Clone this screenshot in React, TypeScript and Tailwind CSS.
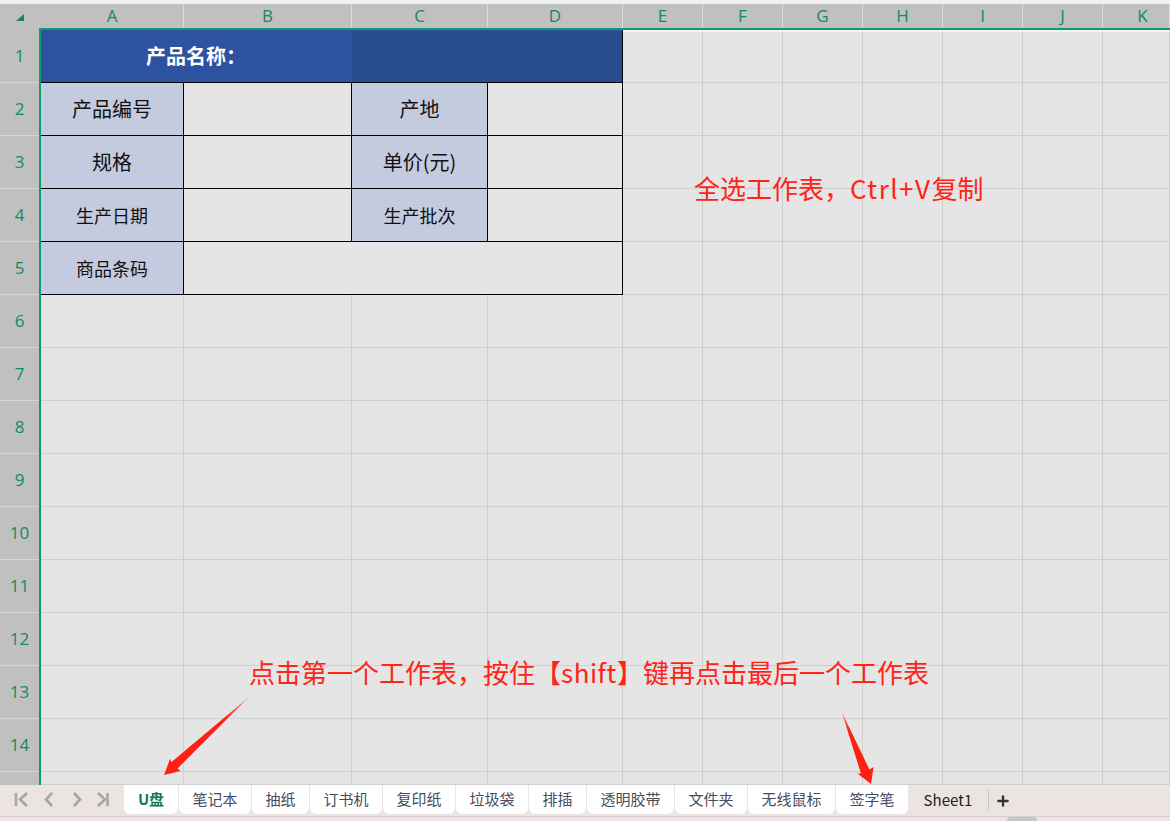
import { Plus } from 'lucide-react';

const cols = [
  { name: 'A', cls: 'w-[145px] pl-[2px]' },
  { name: 'B', cls: 'w-[168px]' },
  { name: 'C', cls: 'w-[136px]' },
  { name: 'D', cls: 'w-[135px]' },
  { name: 'E', cls: 'w-[80px]' },
  { name: 'F', cls: 'w-[80px]' },
  { name: 'G', cls: 'w-[80px]' },
  { name: 'H', cls: 'w-[80px]' },
  { name: 'I', cls: 'w-[80px]' },
  { name: 'J', cls: 'w-[80px]' },
  // runs on past the window edge, so its letter sits right of the visible middle
  { name: 'K', cls: 'w-[67px] pl-[13px]' },
];

const rows = Array.from({ length: 14 }, (_, i) => i + 1);

const tabs = [
  { name: '笔记本', cls: 'w-[72px]' },
  { name: '抽纸', cls: 'w-[57px]' },
  { name: '订书机', cls: 'w-[72px]' },
  { name: '复印纸', cls: 'w-[72px]' },
  { name: '垃圾袋', cls: 'w-[72px]' },
  { name: '排插', cls: 'w-[57px]' },
  { name: '透明胶带', cls: 'w-[87px]' },
  { name: '文件夹', cls: 'w-[72px]' },
  { name: '无线鼠标', cls: 'w-[87px]' },
  { name: '签字笔', cls: 'w-[72px]' },
];

function Label({ text, small }: { text: string; small?: boolean }) {
  return (
    <div
      className={`flex items-center justify-center bg-[#c4cbdf] border-r border-b border-black text-[#111] ${
        small ? 'text-[18px]' : 'text-[20px]'
      }`}
    >
      {text}
    </div>
  );
}

function Blank({ cls = '' }: { cls?: string }) {
  return <div className={`border-r border-b border-black ${cls}`} />;
}

// E..K for the rows the table reaches, the whole width below it
function EmptyCells({ count, cls = '' }: { count: number; cls?: string }) {
  return (
    <>
      {Array.from({ length: count }, (_, i) => (
        <div key={i} className={`border-r border-b border-r-[#cfcfcf] border-b-[#cfcfcf] ${cls}`} />
      ))}
    </>
  );
}

function SheetNav() {
  return (
    <div className="flex w-[124px] items-center h-[29px] shrink-0">
      <svg width="124" height="29" viewBox="0 0 124 29" fill="none" stroke="#a6a6a6" strokeWidth="2.6">
        <path d="M16 8v13M27 8l-7 6.5 7 6.5" />
        <path d="M52 8l-6 6.5 6 6.5" />
        <path d="M74 8l6 6.5-6 6.5" />
        <path d="M98 8l7 6.5-7 6.5M107.5 8v13" />
      </svg>
    </div>
  );
}

export default function App() {
  return (
    <div className="relative flex h-[821px] w-[1170px] flex-col overflow-hidden bg-[#f0f0f0] font-['Noto_Sans_CJK_SC','Noto_Sans',sans-serif]">
      <div className="h-1 shrink-0" />

      {/* column letters */}
      <div className="flex h-[26px] shrink-0 bg-[#c0c0c0] font-['Open_Sans','Noto_Sans_CJK_SC',sans-serif] text-[17px] text-[#128a62]">
        <div className="flex w-[39px] shrink-0 items-start justify-center pt-[10px]">
          <svg width="8" height="7" viewBox="0 0 8 7" className="ml-px">
            <path d="M8 0v7H0z" fill="#128a62" />
          </svg>
        </div>
        <div className="flex flex-1 border-b-2 border-[#129a6c]">
          {cols.map((c) => (
            <div key={c.name} className={`flex items-center justify-center border-r border-[#dadada] ${c.cls}`}>
              {c.name}
            </div>
          ))}
        </div>
      </div>

      <div className="flex h-[755px] shrink-0">
        {/* row numbers */}
        <div className="w-[39px] shrink-0 bg-[#c0c0c0] font-['Open_Sans','Noto_Sans_CJK_SC',sans-serif] text-[17px] text-[#128a62]">
          {rows.map((r) => (
            <div key={r} className="flex h-[53px] items-center justify-center border-b border-[#d6d6d6]">
              {r}
            </div>
          ))}
        </div>

        <div className="grid flex-1 grid-cols-[143px_168px_136px_135px_repeat(6,80px)_67px] grid-rows-[repeat(14,53px)_13px] border-l-2 border-[#129a6c] bg-[#e5e5e5]">
          {/* row 1 */}
          <div className="col-span-2 flex items-center justify-center border-b border-black bg-[#2c52a0] pr-[1px] text-[20px] font-bold text-white">
            产品名称：
          </div>
          <div className="col-span-2 border-t border-r border-b border-t-[#2c52a0] border-r-black border-b-black bg-[#294b90]" />
          <EmptyCells count={7} cls="border-t-2 border-t-[#f4f4f4]" />
          {/* row 2 */}
          <Label text="产品编号" />
          <Blank />
          <Label text="产地" />
          <Blank />
          <EmptyCells count={7} />
          {/* row 3 */}
          <Label text="规格" />
          <Blank />
          <Label text="单价(元)" />
          <Blank />
          <EmptyCells count={7} />
          {/* row 4 */}
          <Label text="生产日期" small />
          <Blank />
          <Label text="生产批次" small />
          <Blank />
          <EmptyCells count={7} />
          {/* row 5 */}
          <Label text="商品条码" small />
          <Blank cls="col-span-3" />
          <EmptyCells count={7} />
          {/* rows 6 to 15 */}
          <EmptyCells count={110} />
        </div>
      </div>

      {/* sheet tabs */}
      <div className="flex h-[36px] shrink-0 flex-col bg-[#ebe4e1]">
        <div className="flex h-[31px] items-start text-[15px] text-[#454c5e]">
          <SheetNav />
          <div className="mr-px flex h-[29px] w-[54px] items-center justify-center rounded-b-md bg-white font-bold text-[#0b7d5f]">
            U盘
          </div>
          <div className="flex gap-px">
            {tabs.map((t) => (
              <div key={t.name} className={`flex h-[29px] items-center justify-center rounded-b-md bg-white ${t.cls}`}>
                {t.name}
              </div>
            ))}
          </div>
          <div className="flex h-[29px] w-[80px] items-center justify-center pt-[2px] text-[#222] tracking-[0.1px]">
            Sheet1
          </div>
          <div className="mt-1 h-[22px] w-px bg-[#cfc9c6]" />
          <div className="flex h-[29px] w-[28px] items-center justify-center pt-[2px]">
            <Plus size={16} strokeWidth={3.4} color="#333" />
          </div>
        </div>
        <div className="h-[5px] border-t border-[#d6d0cc]">
          <div className="ml-[1007px] h-1 w-[30px] rounded-t-full bg-[#c9c5c2]" />
        </div>
      </div>

      {/* annotations over the sheet */}
      <div className="absolute left-[694px] top-[169px] whitespace-nowrap text-[26px] leading-[38px] text-[#ff2318]">
        全选工作表，<span className="tracking-[1.5px]">Ctrl+V</span>复制
      </div>
      <div className="absolute left-[249px] top-[653px] whitespace-nowrap text-[26px] leading-[38px] text-[#ff2318]">
        点击第一个工作表，按住【<span className="tracking-[0.5px]">shift</span>】键再点击最后一个工作表
      </div>
      <svg className="absolute left-0 top-0" width="1170" height="821" viewBox="0 0 1170 821" fill="none">
        <defs>
          <linearGradient id="tailA" gradientUnits="userSpaceOnUse" x1="249" y1="697" x2="225" y2="720">
            <stop offset="0" stopColor="#ff8f88" />
            <stop offset="1" stopColor="#ff2015" />
          </linearGradient>
          <linearGradient id="tailB" gradientUnits="userSpaceOnUse" x1="842" y1="712" x2="849" y2="730">
            <stop offset="0" stopColor="#ff8f88" />
            <stop offset="1" stopColor="#ff2015" />
          </linearGradient>
        </defs>
        <polygon points="249.5,696.5 177.5,768.5 180.5,771 164,775 170,759 171.5,762" fill="url(#tailA)" />
        <polygon points="841.5,711.5 869.5,769.5 873.5,767 871,784 857.5,773.5 861,773.5" fill="url(#tailB)" />
      </svg>
    </div>
  );
}
